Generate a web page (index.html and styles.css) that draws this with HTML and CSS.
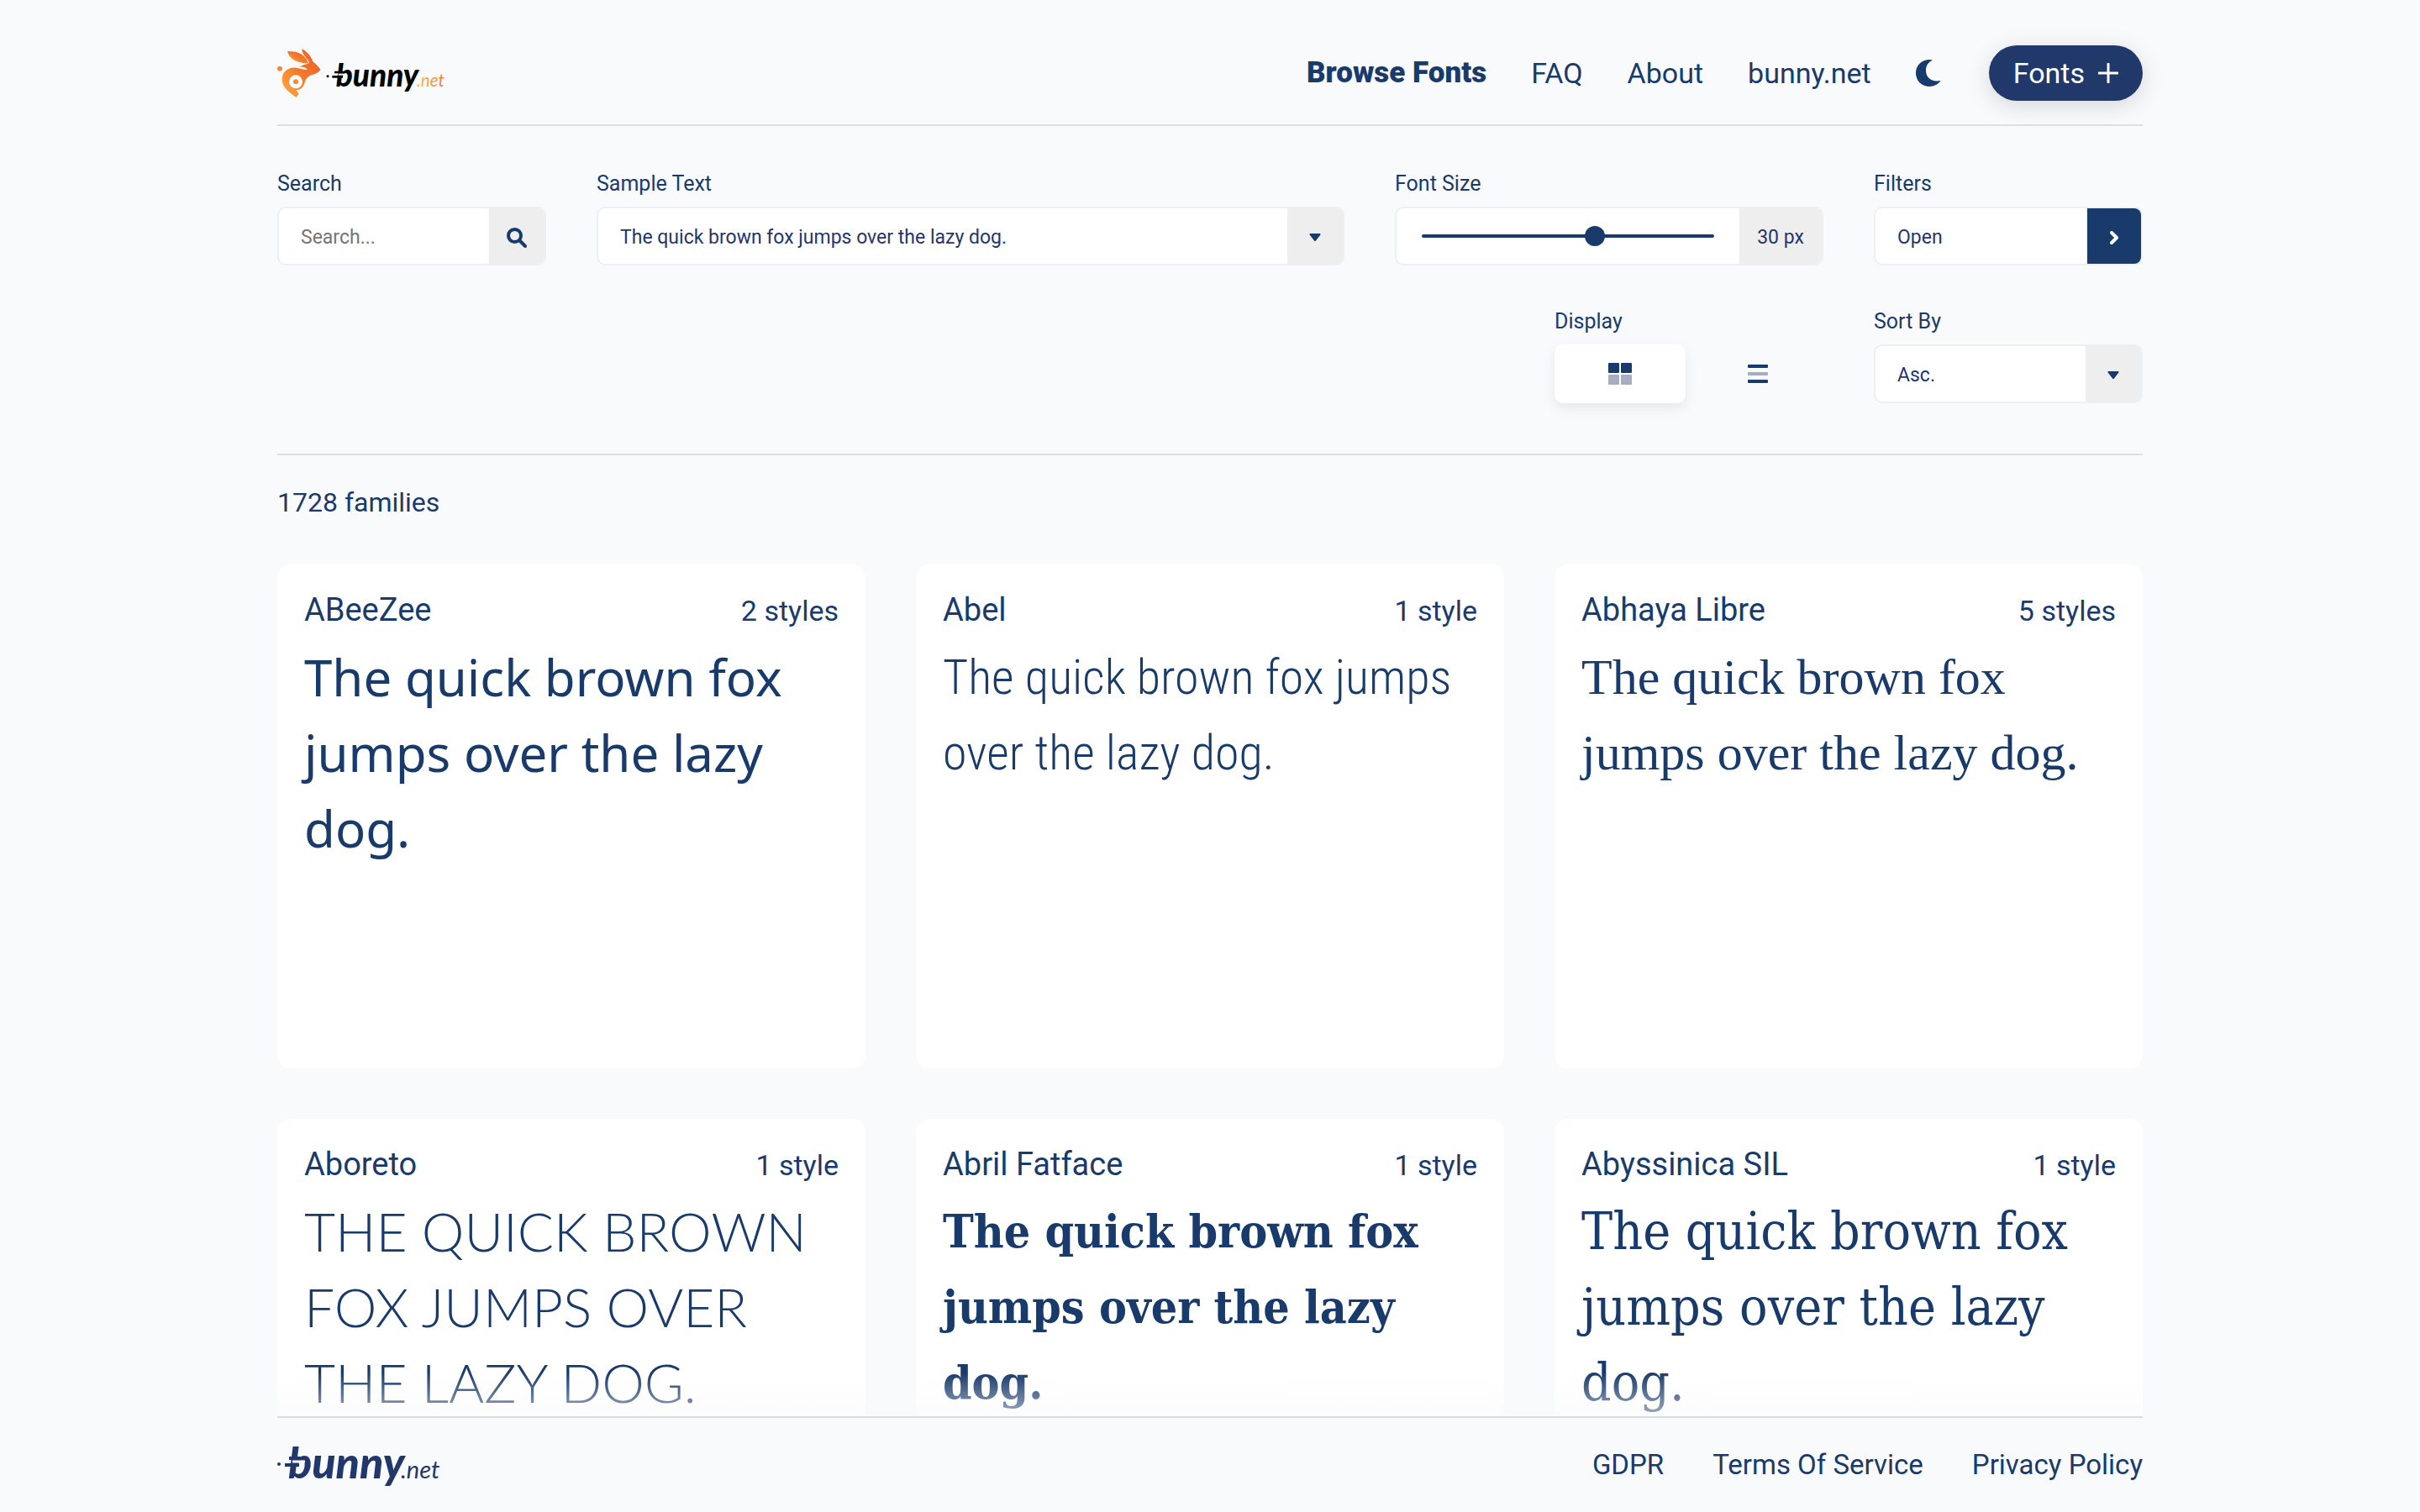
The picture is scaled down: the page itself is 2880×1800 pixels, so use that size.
FILE: index.html
```html
<!DOCTYPE html>
<html lang="en">
<head>
<meta charset="utf-8">
<meta name="viewport" content="width=device-width, initial-scale=1">
<title>Bunny Fonts | Browse Fonts</title>
<link rel="stylesheet" href="styles.css">
</head>
<body>
<div class="app">
  <div class="scroll">
    <header class="container header">
      <a href="#" class="logo" aria-label="bunny.net home">
        <svg class="logo-svg" viewBox="30 50 606 186" aria-hidden="true">
          <defs>
            <linearGradient id="fur" x1="1" y1="0" x2="0" y2="1">
              <stop offset="0" stop-color="#ee5a24"/><stop offset=".5" stop-color="#f5782a"/><stop offset="1" stop-color="#fbab3c"/>
            </linearGradient>
            <linearGradient id="net" x1="0" y1="0" x2="1" y2="0">
              <stop offset="0" stop-color="#fbb94e"/><stop offset="1" stop-color="#ef7d3c"/>
            </linearGradient>
          </defs>
          <circle cx="39" cy="127" r="9" fill="#f58a32"/>
          <path fill="url(#fur)" d="M66 65C95 64 124 72 138 100L141 108C112 108 76 100 66 65Z"/>
          <path fill="url(#fur)" d="M118 56C138 68 152 84 157 102C164 108 176 118 184 130C178 141 166 146 152 150C138 155 131 167 127 180C122 196 112 204 96 204L106 216C104 223 101 227 97 229C80 217 48 198 47 167C46 140 68 122 96 124C112 125 122 132 137 131C134 124 122 120 108 121C122 112 140 110 144 106C142 92 118 82 118 56Z"/>
          <circle cx="96" cy="174" r="24" fill="#f9fafc"/>
          <circle cx="96" cy="174" r="9" fill="#f68b30"/>
          <circle cx="210" cy="154" r="4.500" fill="#000"/>
          <path d="M234 140H268M226 156H264" stroke="#000" stroke-width="8" fill="none"/>
          <text class="wordmark" x="239" y="190" fill="#000">bunny</text>
          <path d="M248 148H274" stroke="#f9fafc" stroke-width="6"/>
          <text class="wordmark-net" x="528" y="190" fill="url(#net)">.net</text>
        </svg>
      </a>
      <nav class="nav" aria-label="Main">
        <a href="#" class="current">Browse Fonts</a>
        <a href="#">FAQ</a>
        <a href="#">About</a>
        <a href="#">bunny.net</a>
        <button type="button" class="theme" aria-label="Dark mode">
          <svg viewBox="0 0 30 32" aria-hidden="true"><path fill="currentColor" d="M16 0C7 0 0 7 0 16S7 32 16 32C22 32 27 29 29.500 25C18 27 12 21 12 13C12 7 15 3 20 .6C19 .2 17.500 0 16 0Z"/></svg>
        </button>
        <button type="button" class="cart">Fonts
          <svg viewBox="0 0 24 24" aria-hidden="true"><path d="M12 1V23M1 12H23" stroke="currentColor" stroke-width="3" stroke-linecap="round"/></svg>
        </button>
      </nav>
    </header>

    <form class="container controls">
      <div class="control span-2">
        <label for="search">Search</label>
        <div class="field">
          <input id="search" type="text" placeholder="Search...">
          <button type="button" class="side" aria-label="Search">
            <svg class="i-search" viewBox="0 0 24 24" aria-hidden="true"><circle cx="9.500" cy="9.500" r="7.500" fill="none" stroke="currentColor" stroke-width="4"/><path d="M15.500 15.500L22 22" stroke="currentColor" stroke-width="4" stroke-linecap="round"/></svg>
          </button>
        </div>
      </div>
      <div class="control span-5">
        <label for="sample">Sample Text</label>
        <div class="field">
          <select id="sample"><option>The quick brown fox jumps over the lazy dog.</option></select>
          <span class="side"><svg class="i-caret" viewBox="0 0 14 10" aria-hidden="true"><path fill="currentColor" d="M1.500 0H12.500Q14.500 .4 13 2L8 8.500Q7 9.600 6 8.500L1 2Q-.5 .4 1.500 0Z"/></svg></span>
        </div>
      </div>
      <div class="control span-3">
        <label for="size">Font Size</label>
        <div class="field">
          <div class="range"><input id="size" type="range" min="12" max="42" value="30"></div>
          <output class="side value" for="size">30 px</output>
        </div>
      </div>
      <div class="control span-2">
        <label for="filters">Filters</label>
        <button type="button" id="filters" class="field opener">
          <span class="opener-text">Open</span>
          <span class="side side-dark"><svg class="i-chevron" viewBox="0 0 12 18" aria-hidden="true"><path d="M3 3L9 9L3 15" fill="none" stroke="currentColor" stroke-width="4" stroke-linecap="round" stroke-linejoin="round"/></svg></span>
        </button>
      </div>
      <div class="control span-2 display" role="group" aria-labelledby="display-label">
        <span class="label" id="display-label">Display</span>
        <div class="toggle">
          <button type="button" class="view active" aria-label="Grid" aria-pressed="true">
            <svg class="i-grid" viewBox="0 0 28 26" aria-hidden="true"><g fill="#193b6b"><rect width="13" height="12" rx="1"/><rect x="15" width="13" height="12" rx="1"/></g><g fill="#a8adc3"><rect y="14" width="13" height="12" rx="1"/><rect x="15" y="14" width="13" height="12" rx="1"/></g></svg>
          </button>
          <button type="button" class="view" aria-label="List" aria-pressed="false">
            <svg class="i-list" viewBox="0 0 24 22" aria-hidden="true"><rect width="24" height="4" rx="1" fill="#193b6b"/><rect y="9" width="24" height="4" rx="1" fill="#a8adc3"/><rect y="18" width="24" height="4" rx="1" fill="#193b6b"/></svg>
          </button>
        </div>
      </div>
      <div class="control span-2">
        <label for="sort">Sort By</label>
        <div class="field">
          <select id="sort"><option>Asc.</option></select>
          <span class="side"><svg class="i-caret" viewBox="0 0 14 10" aria-hidden="true"><path fill="currentColor" d="M1.500 0H12.500Q14.500 .4 13 2L8 8.500Q7 9.600 6 8.500L1 2Q-.5 .4 1.500 0Z"/></svg></span>
        </div>
      </div>
    </form>

    <main class="container">
      <p class="count">1728 families</p>
      <div class="cards">
        <article class="card"><div class="card-head"><h2>ABeeZee</h2><span>2 styles</span></div><p class="sample f-abeezee">The quick brown fox jumps over the lazy dog.</p></article>
        <article class="card"><div class="card-head"><h2>Abel</h2><span>1 style</span></div><p class="sample f-abel">The quick brown fox jumps over the lazy dog.</p></article>
        <article class="card"><div class="card-head"><h2>Abhaya Libre</h2><span>5 styles</span></div><p class="sample f-abhaya">The quick brown fox jumps over the lazy dog.</p></article>
        <article class="card"><div class="card-head"><h2>Aboreto</h2><span>1 style</span></div><p class="sample f-aboreto">The quick brown fox jumps over the lazy dog.</p></article>
        <article class="card"><div class="card-head"><h2>Abril Fatface</h2><span>1 style</span></div><p class="sample f-abril">The quick brown fox jumps over the lazy dog.</p></article>
        <article class="card"><div class="card-head"><h2>Abyssinica SIL</h2><span>1 style</span></div><p class="sample f-abyssinica">The quick brown fox jumps over the lazy dog.</p></article>
      </div>
    </main>
  </div>

  <footer class="footer">
    <div class="container footer-inner">
      <a href="#" class="logo" aria-label="bunny.net">
        <svg class="logo-foot" viewBox="0 0 200 72" aria-hidden="true">
          <circle cx="2" cy="35" r="2" fill="#22376b"/>
          <path d="M14 28H28M9 36H26" stroke="#22376b" stroke-width="4"/>
          <text class="foot-word" x="13" y="52" fill="#22376b">bunny</text>
          <path d="M18 32H33" stroke="#f9fafc" stroke-width="3"/>
          <text class="foot-net" x="147" y="52" fill="#22376b">.net</text>
        </svg>
      </a>
      <nav class="foot-nav" aria-label="Legal">
        <a href="#">GDPR</a>
        <a href="#">Terms Of Service</a>
        <a href="#">Privacy Policy</a>
      </nav>
    </div>
  </footer>
</div>
</body>
</html>
```

FILE: styles.css
```css
* { box-sizing: border-box; }

body {
  margin: 0;
  background: #f9fafc;
  color: #193b6b;
  font-family: Roboto, "Liberation Sans", sans-serif;
  font-size: 34px;
  line-height: 40px;
}

a { color: inherit; text-decoration: none; }
h2, p { margin: 0; font-weight: 400; }
svg { display: block; }
button, input, select { font: inherit; color: inherit; margin: 0; border: 0; background: none; }
button { padding: 0; cursor: pointer; }

.app { display: flex; flex-direction: column; height: 100vh; }
.scroll { flex: 1; min-height: 0; overflow-y: auto; scrollbar-width: none; }
.container { width: calc(100% - 60px); max-width: 2220px; margin: 0 auto; }

.header {
  display: flex;
  justify-content: space-between;
  align-items: center;
  padding: 54px 0 28px;
  border-bottom: 2px solid #dddfe2;
}
.logo-svg { width: 202px; height: 62px; overflow: visible; }
.wordmark { font: italic 900 111px Lato, sans-serif; }
.wordmark-net { font: italic 400 62px Lato, sans-serif; }

.nav { display: flex; align-items: center; gap: 53px; }
.current { font-size: 35px; font-weight: 900; }
.theme svg { width: 30px; height: 32px; }
.cart {
  display: flex;
  align-items: center;
  gap: 16px;
  height: 66px;
  margin-left: 4px;
  padding: 0 29px;
  border-radius: 33px;
  background: #21386a;
  color: #fff;
  box-shadow: 0 6px 28px rgba(0, 0, 0, .14);
}
.cart svg { width: 24px; height: 24px; }

.controls {
  display: grid;
  grid-template-columns: repeat(12, minmax(0, 1fr));
  gap: 52px 60px;
  padding: 54px 0 60px;
  border-bottom: 2px solid #dddfe2;
}
.control { display: flex; flex-direction: column; gap: 12px; font-size: 23px; }
.control label, .label { font-size: 25px; line-height: 30px; }
.span-2 { grid-column-end: span 2; }
.span-3 { grid-column-end: span 3; }
.span-5 { grid-column-end: span 5; }
.display { grid-column-start: 9; }

.field {
  display: flex;
  height: 70px;
  border: 2px solid #eeeff0;
  border-radius: 10px;
  background: #fff;
  overflow: hidden;
}
.field input[type="text"], .field select {
  flex: 1;
  min-width: 0;
  padding: 3px 26px 0;
  appearance: none;
  color: #26356a;
}
.field input::placeholder { color: #757575; opacity: 1; }
.side {
  display: flex;
  flex: none;
  align-items: center;
  justify-content: center;
  width: 66px;
  padding-top: 3px;
  background: #eee;
}
.value { width: 98px; color: #26356a; }
.side-dark { width: 64px; background: #193b6b; color: #fff; }
.opener { padding: 0; text-align: left; color: #26356a; }
.opener .side { height: 100%; }
.opener-text { flex: 1; align-self: center; padding: 3px 26px 0; }
.i-search { width: 24px; height: 24px; }
.i-caret { width: 14px; height: 10px; }
.i-chevron { width: 12px; height: 18px; }
.i-grid { width: 28px; height: 26px; }
.i-list { width: 24px; height: 22px; }

.range { display: flex; flex: 1; align-items: center; padding: 0 30px; }
.range input { appearance: none; width: 100%; height: 24px; }
.range input::-webkit-slider-runnable-track { height: 4px; border-radius: 2px; background: #193b6b; }
.range input::-webkit-slider-thumb {
  appearance: none;
  width: 24px;
  height: 24px;
  margin-top: -10px;
  border-radius: 50%;
  background: #193b6b;
}

.toggle { display: flex; gap: 8px; height: 70px; }
.view { display: flex; flex: 1; align-items: center; justify-content: center; border-radius: 10px; }
.active { background: #fff; box-shadow: 0 6px 16px rgba(0, 0, 0, .08); }

.count { padding: 36px 0 54px; font-size: 32px; }
.cards { display: grid; grid-template-columns: repeat(3, minmax(0, 1fr)); gap: 60px; }
.card { min-height: 600px; padding: 34px 32px; border-radius: 16px; background: #fff; }
.card-head { display: flex; justify-content: space-between; align-items: baseline; margin-bottom: 14px; }
.card-head h2 { font-size: 38px; }
.sample { font-size: 60px; line-height: 90px; }
.f-abeezee { font-family: "Noto Sans", sans-serif; }
.f-abel { font-family: "Roboto Condensed", Roboto, sans-serif; font-size: 58px; font-weight: 300; }
.f-abhaya { font-family: "Liberation Serif", serif; }
.f-aboreto { font-family: Lato, sans-serif; font-size: 64px; font-weight: 300; text-transform: uppercase; }
.f-abril { font-family: "DejaVu Serif Condensed", "DejaVu Serif", serif; font-weight: 700; font-size: 55px; }
.f-abyssinica { font-family: "DejaVu Serif Condensed", "DejaVu Serif", serif; font-size: 62px; }

.footer { position: relative; flex: none; background: #f9fafc; }
.footer::before {
  content: "";
  position: absolute;
  inset: -52px 0 100%;
  background: linear-gradient(rgba(249, 250, 252, 0), rgba(249, 250, 252, .6));
  pointer-events: none;
}
.footer-inner {
  position: relative;
  display: flex;
  justify-content: space-between;
  align-items: center;
  height: 114px;
  border-top: 2px solid #d9dde1;
}
.logo-foot { width: 200px; height: 72px; }
.foot-word { font: italic 900 52px Lato, sans-serif; }
.foot-net { font: italic 400 29px Lato, sans-serif; }
.foot-nav { display: flex; gap: 58px; font-size: 33px; }
```
